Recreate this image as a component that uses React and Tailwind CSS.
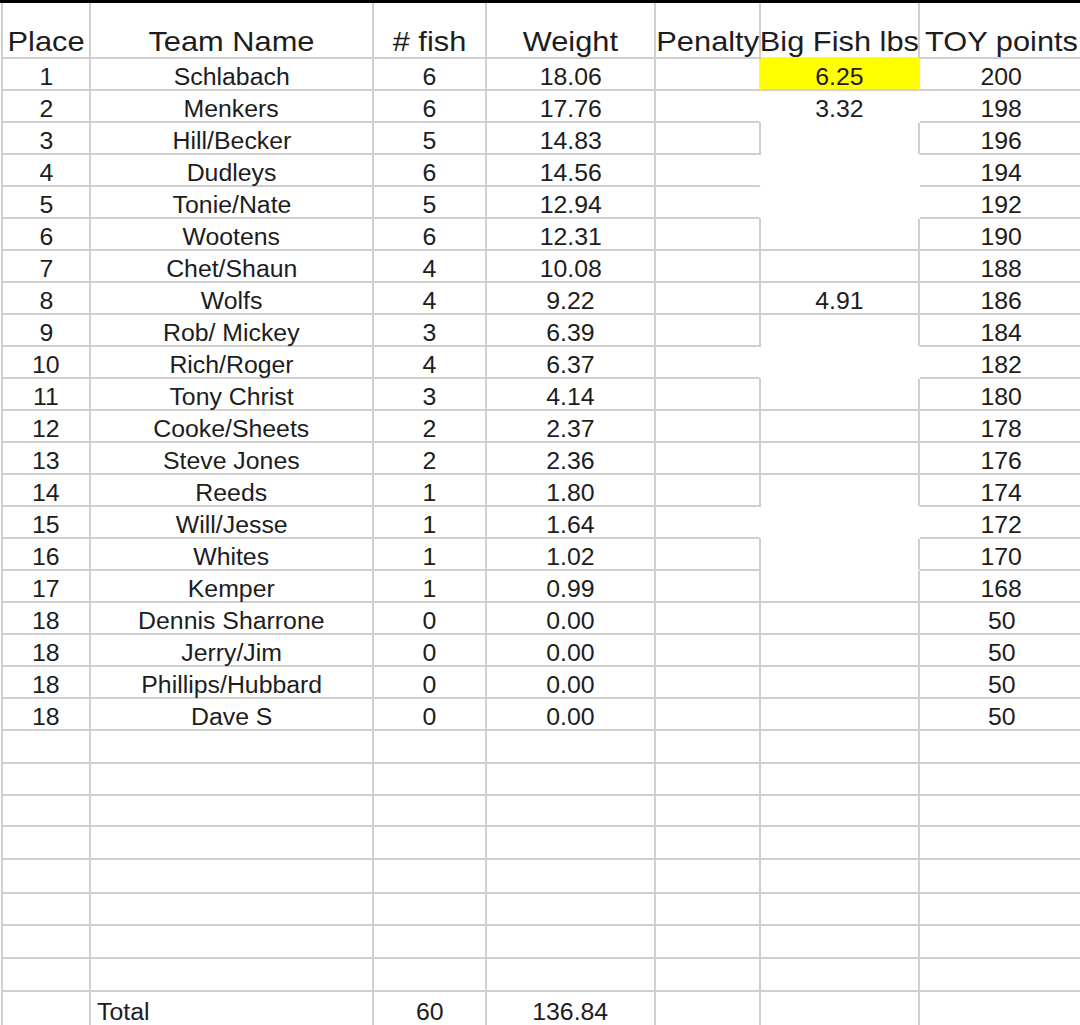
import React from "react";

const GRID = "grid grid-cols-[88px_283px_113px_169px_105px_159px_165px]";

const data = [
  ["1", "Schlabach", "6", "18.06", "6.25", "200"],
  ["2", "Menkers", "6", "17.76", "3.32", "198"],
  ["3", "Hill/Becker", "5", "14.83", "", "196"],
  ["4", "Dudleys", "6", "14.56", "", "194"],
  ["5", "Tonie/Nate", "5", "12.94", "", "192"],
  ["6", "Wootens", "6", "12.31", "", "190"],
  ["7", "Chet/Shaun", "4", "10.08", "", "188"],
  ["8", "Wolfs", "4", "9.22", "4.91", "186"],
  ["9", "Rob/ Mickey", "3", "6.39", "", "184"],
  ["10", "Rich/Roger", "4", "6.37", "", "182"],
  ["11", "Tony Christ", "3", "4.14", "", "180"],
  ["12", "Cooke/Sheets", "2", "2.37", "", "178"],
  ["13", "Steve Jones", "2", "2.36", "", "176"],
  ["14", "Reeds", "1", "1.80", "", "174"],
  ["15", "Will/Jesse", "1", "1.64", "", "172"],
  ["16", "Whites", "1", "1.02", "", "170"],
  ["17", "Kemper", "1", "0.99", "", "168"],
  ["18", "Dennis Sharrone", "0", "0.00", "", "50"],
  ["18", "Jerry/Jim", "0", "0.00", "", "50"],
  ["18", "Phillips/Hubbard", "0", "0.00", "", "50"],
  ["18", "Dave S", "0", "0.00", "", "50"],
];

// v: vertical lines at penalty|bigfish and bigfish|toy ; bb: bottom line under big fish
const lines = [
  { v: false, bb: true },
  { v: false, bb: false },
  { v: true, bb: false },
  { v: false, bb: false },
  { v: false, bb: false },
  { v: true, bb: true },
  { v: true, bb: true },
  { v: true, bb: true },
  { v: true, bb: false },
  { v: false, bb: false },
  { v: true, bb: true },
  { v: true, bb: true },
  { v: true, bb: true },
  { v: true, bb: false },
  { v: false, bb: false },
  { v: true, bb: false },
  { v: true, bb: true },
  { v: true, bb: true },
  { v: true, bb: true },
  { v: true, bb: true },
  { v: true, bb: true },
];

const emptyHeights = ["h-[33px]", "h-[32px]", "h-[31px]", "h-[33px]", "h-[34px]", "h-[32px]", "h-[33px]", "h-[33px]"];

function Txt({ children }) {
  return (
    <span className="inline-block origin-center scale-x-[1.08] whitespace-nowrap text-[23px] leading-[24px]">
      {children}
    </span>
  );
}

function HTxt({ children }) {
  return (
    <span className="inline-block origin-center scale-x-[1.1] whitespace-nowrap text-[28px] leading-[31px]">
      {children}
    </span>
  );
}

const cellBase = "flex items-end justify-center border-r-2 border-b-2 border-[#cfcfcf]";

export default function App() {
  return (
    <div className="w-[1080px] h-[1025px] overflow-hidden bg-white font-['Liberation_Sans',Arial,Helvetica,sans-serif] text-[#1d1d1d]">
      <div className="h-[3px] bg-black" />
      <div className="pl-[1px]">
        <div className="w-[1084px] border-l-2 border-[#cfcfcf]">
          {/* header */}
          <div className={`${GRID} h-[56px]`}>
            <div className={cellBase}><HTxt>Place</HTxt></div>
            <div className={cellBase}><HTxt>Team Name</HTxt></div>
            <div className={cellBase}><HTxt># fish</HTxt></div>
            <div className={cellBase}><HTxt>Weight</HTxt></div>
            <div className={cellBase}><HTxt>Penalty</HTxt></div>
            <div className={`${cellBase} border-b-[#ffff00]`}><HTxt>Big Fish lbs</HTxt></div>
            <div className={cellBase}><HTxt>TOY points</HTxt></div>
          </div>

          {data.map((r, i) => {
            const l = lines[i];
            const first = i === 0;
            const pRight = first ? "border-r-[#ffff00]" : l.v ? "border-r-[#cfcfcf]" : "border-r-transparent";
            const bRight = first ? "border-r-[#ffff00]" : l.v ? "border-r-[#cfcfcf]" : "border-r-transparent";
            const bBottom = l.bb ? "border-b-[#cfcfcf]" : "border-b-transparent";
            return (
              <div key={i} className={`${GRID} h-[32px]`}>
                <div className={cellBase}><Txt>{r[0]}</Txt></div>
                <div className={cellBase}><Txt>{r[1]}</Txt></div>
                <div className={cellBase}><Txt>{r[2]}</Txt></div>
                <div className={cellBase}><Txt>{r[3]}</Txt></div>
                <div className={`${cellBase} ${pRight}`} />
                <div className={`${cellBase} ${bRight} ${bBottom} ${first ? "bg-[#ffff00]" : ""}`}>
                  <Txt>{r[4]}</Txt>
                </div>
                <div className={cellBase}><Txt>{r[5]}</Txt></div>
              </div>
            );
          })}

          {emptyHeights.map((h, i) => (
            <div key={`e${i}`} className={`${GRID} ${h}`}>
              <div className={cellBase} />
              <div className={cellBase} />
              <div className={cellBase} />
              <div className={cellBase} />
              <div className={cellBase} />
              <div className={cellBase} />
              <div className={cellBase} />
            </div>
          ))}

          {/* total row */}
          <div className={`${GRID} h-[38px]`}>
            <div className="border-r-2 border-[#cfcfcf]" />
            <div className="flex items-end justify-start pl-[6px] pb-[6px] border-r-2 border-[#cfcfcf]">
              <span className="inline-block origin-left scale-x-[1.08] whitespace-nowrap text-[23px] leading-[24px]">Total</span>
            </div>
            <div className="flex items-end justify-center pb-[6px] border-r-2 border-[#cfcfcf]"><Txt>60</Txt></div>
            <div className="flex items-end justify-center pb-[6px] border-r-2 border-[#cfcfcf]"><Txt>136.84</Txt></div>
            <div className="border-r-2 border-[#cfcfcf]" />
            <div className="border-r-2 border-[#cfcfcf]" />
            <div className="border-r-2 border-[#cfcfcf]" />
          </div>
        </div>
      </div>
    </div>
  );
}
